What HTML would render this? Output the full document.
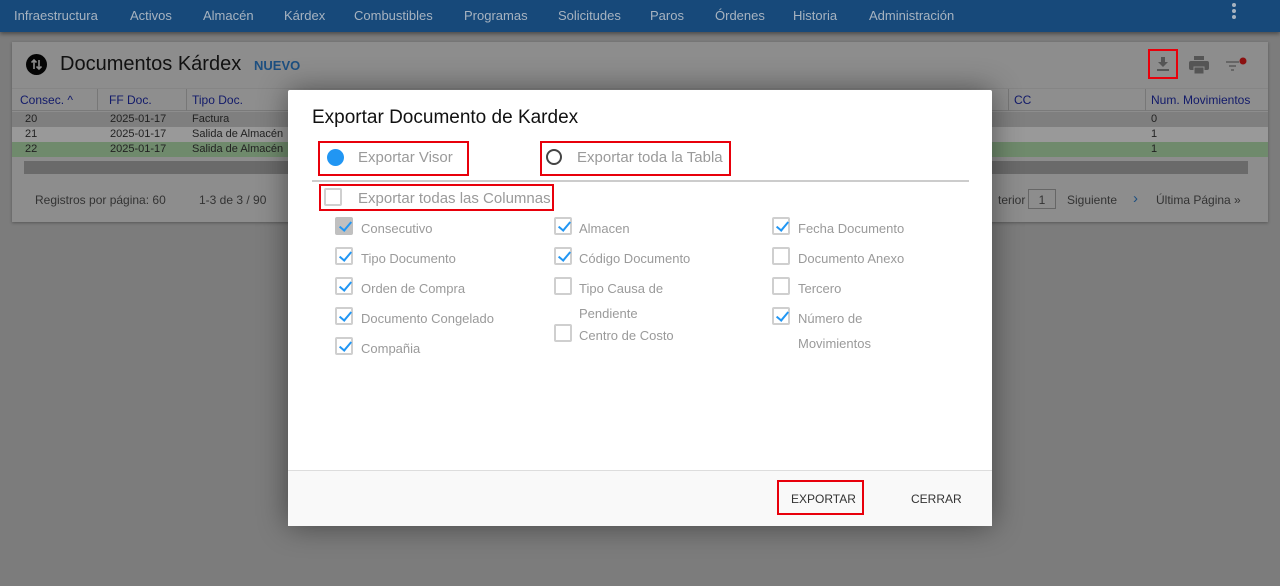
<!DOCTYPE html>
<html><head><meta charset="utf-8"><style>
*{box-sizing:border-box;margin:0;padding:0}
body{width:1280px;height:586px;overflow:hidden;background:#7c7c7c;font-family:"Liberation Sans",sans-serif;position:relative}
.nav{position:absolute;left:0;top:0;width:1280px;height:32px;background:#17497a;box-shadow:0 2px 4px rgba(0,0,0,.4)}
.nav span{position:absolute;top:8px;font-size:13px;color:#a7b3c0}
.card{position:absolute;left:12px;top:42px;width:1256px;height:180px;background:#8d8d8d;box-shadow:0 1px 3px rgba(0,0,0,.3)}
.abs{position:absolute}
.hdr{position:absolute;left:0;top:46px;width:1256px;height:23px;background:#8e8e8e;border-top:1px solid #858585;border-bottom:1px solid #7a7a7a}
.hdr span{position:absolute;top:4px;font-size:12px;color:#121a6a}
.row{position:absolute;left:0;width:1256px;height:15px;font-size:11px;color:#222}
.row span{position:absolute;top:1px}
.dlg{position:absolute;left:288px;top:90px;width:704px;height:436px;background:#fff;border-radius:2px;box-shadow:0 0 30px rgba(0,0,0,.45)}
.red{position:absolute;border:2px solid #e8000b}
.cb{position:absolute;width:18px;height:18px;border:2px solid #cfcfcf;border-radius:2px}
.cb.c::after{content:"";position:absolute;left:5px;top:0px;width:5px;height:10px;border:solid #2196f3;border-width:0 2px 2px 0;transform:rotate(40deg)}
.lbl{position:absolute;font-size:13px;color:#9a9a9a}
</style></head><body>
<div class="nav">
<span style="left:14px">Infraestructura</span><span style="left:130px">Activos</span><span style="left:203px">Almacén</span><span style="left:284px">Kárdex</span><span style="left:354px">Combustibles</span><span style="left:464px">Programas</span><span style="left:558px">Solicitudes</span><span style="left:650px">Paros</span><span style="left:715px">Órdenes</span><span style="left:793px">Historia</span><span style="left:869px">Administración</span>
<svg class="abs" style="left:1230px;top:2px" width="8" height="18"><circle cx="4" cy="3" r="2" fill="#a7b3c0"/><circle cx="4" cy="9" r="2" fill="#a7b3c0"/><circle cx="4" cy="15" r="2" fill="#a7b3c0"/></svg>
</div>
<div class="card">
<svg class="abs" style="left:14px;top:12px" width="21" height="21" viewBox="0 0 21 21"><circle cx="10.5" cy="10.5" r="10.5" fill="#050505"/><path d="M8 15V6M5.5 8.5L8 6l2.5 2.5M13 6v9M10.5 12.5L13 15l2.5-2.5" stroke="#8d8d8d" stroke-width="1.6" fill="none"/></svg>
<div class="abs" style="left:48px;top:11px;font-size:20px;color:#111">Documentos Kárdex</div>
<div class="abs" style="left:242px;top:16px;font-size:13px;font-weight:bold;color:#1d4f80">NUEVO</div>
<div class="abs" style="left:1136px;top:7px;width:30px;height:30px;border:2px solid #e8000b"></div>
<svg class="abs" style="left:1143px;top:14px" width="16" height="16" viewBox="0 0 16 16"><path d="M6 1h4v5h3l-5 5-5-5h3z" fill="#555"/><rect x="2" y="13" width="12" height="2" fill="#555"/></svg>
<svg class="abs" style="left:1177px;top:14px" width="20" height="18" viewBox="0 0 20 18"><rect x="5" y="0" width="10" height="4" fill="#555"/><rect x="0" y="5" width="20" height="9" rx="2" fill="#555"/><rect x="5" y="11" width="10" height="7" fill="#555" stroke="#8d8d8d" stroke-width="1"/></svg>
<svg class="abs" style="left:1213px;top:14px" width="24" height="18" viewBox="0 0 24 18"><path d="M1 6h13M4 10h7M6 14h3" stroke="#666" stroke-width="2"/><circle cx="18" cy="5" r="3.5" fill="#8b1010"/></svg>
<div class="hdr">
<span style="left:8px">Consec. ^</span><span style="left:97px">FF Doc.</span><span style="left:180px">Tipo Doc.</span><span style="left:1002px">CC</span><span style="left:1139px">Num. Movimientos</span>
<i class="abs" style="left:85px;top:0;width:1px;height:22px;background:#777"></i><i class="abs" style="left:174px;top:0;width:1px;height:22px;background:#777"></i><i class="abs" style="left:996px;top:0;width:1px;height:22px;background:#777"></i><i class="abs" style="left:1133px;top:0;width:1px;height:22px;background:#777"></i>
</div>
<div class="row" style="top:70px;background:#7f7f7f"><span style="left:13px">20</span><span style="left:98px">2025-01-17</span><span style="left:180px">Factura</span><span style="left:1139px">0</span></div>
<div class="row" style="top:85px;background:#999"><span style="left:13px">21</span><span style="left:98px">2025-01-17</span><span style="left:180px">Salida de Almacén</span><span style="left:1139px">1</span></div>
<div class="row" style="top:100px;background:#6f8a6c"><span style="left:13px">22</span><span style="left:98px">2025-01-17</span><span style="left:180px">Salida de Almacén</span><span style="left:1139px">1</span></div>
<div class="abs" style="left:12px;top:119px;width:1224px;height:13px;background:#6a6a6a"></div>
<div class="abs" style="left:23px;top:151px;font-size:12px;color:#333">Registros por página: 60</div>
<div class="abs" style="left:187px;top:151px;font-size:12px;color:#333">1-3 de 3 / 90</div>
<div class="abs" style="left:986px;top:151px;font-size:12px;color:#333">terior</div>
<div class="abs" style="left:1016px;top:147px;width:28px;height:20px;border:1px solid #666;font-size:12px;text-align:center;padding-top:3px;color:#333">1</div>
<div class="abs" style="left:1055px;top:151px;font-size:12px;color:#333">Siguiente</div>
<div class="abs" style="left:1121px;top:148px;font-size:15px;color:#1d4f80">›</div>
<div class="abs" style="left:1144px;top:151px;font-size:12px;color:#333">Última Página »</div>
</div>
<div class="dlg">
<div class="abs" style="left:24px;top:17px;font-size:19px;color:#111">Exportar Documento de Kardex</div>
<div class="red" style="left:30px;top:51px;width:151px;height:35px"></div>
<div class="abs" style="left:39px;top:59px;width:17px;height:17px;border-radius:50%;background:#2196f3"></div>
<div class="lbl" style="left:70px;top:59px;font-size:15px">Exportar Visor</div>
<div class="red" style="left:252px;top:51px;width:191px;height:35px"></div>
<div class="abs" style="left:258px;top:59px;width:16px;height:16px;border-radius:50%;border:2px solid #444"></div>
<div class="lbl" style="left:289px;top:59px;font-size:15px">Exportar toda la Tabla</div>
<div class="abs" style="left:24px;top:90px;width:657px;height:2px;background:#ccc"></div>
<div class="red" style="left:31px;top:94px;width:235px;height:27px"></div>
<div class="cb" style="left:36px;top:98px;width:18px;height:18px"></div>
<div class="lbl" style="left:70px;top:100px;font-size:15px">Exportar todas las Columnas</div>

<div class="cb c" style="left:47px;top:127px;background:#c0c0c0;border-color:#c0c0c0"></div><div class="lbl" style="left:73px;top:131px">Consecutivo</div>
<div class="cb c" style="left:47px;top:157px"></div><div class="lbl" style="left:73px;top:161px">Tipo Documento</div>
<div class="cb c" style="left:47px;top:187px"></div><div class="lbl" style="left:73px;top:191px">Orden de Compra</div>
<div class="cb c" style="left:47px;top:217px"></div><div class="lbl" style="left:73px;top:221px">Documento Congelado</div>
<div class="cb c" style="left:47px;top:247px"></div><div class="lbl" style="left:73px;top:251px">Compañia</div>

<div class="cb c" style="left:266px;top:127px"></div><div class="lbl" style="left:291px;top:131px">Almacen</div>
<div class="cb c" style="left:266px;top:157px"></div><div class="lbl" style="left:291px;top:161px">Código Documento</div>
<div class="cb" style="left:266px;top:187px"></div><div class="lbl" style="left:291px;top:186px;line-height:25px">Tipo Causa de<br>Pendiente</div>
<div class="cb" style="left:266px;top:234px"></div><div class="lbl" style="left:291px;top:238px">Centro de Costo</div>

<div class="cb c" style="left:484px;top:127px"></div><div class="lbl" style="left:510px;top:131px">Fecha Documento</div>
<div class="cb" style="left:484px;top:157px"></div><div class="lbl" style="left:510px;top:161px">Documento Anexo</div>
<div class="cb" style="left:484px;top:187px"></div><div class="lbl" style="left:510px;top:191px">Tercero</div>
<div class="cb c" style="left:484px;top:217px"></div><div class="lbl" style="left:510px;top:216px;line-height:25px">Número de<br>Movimientos</div>

<div class="abs" style="left:0;top:380px;width:704px;height:56px;background:#f9f9f9;border-top:1px solid #ddd"></div>
<div class="red" style="left:489px;top:390px;width:87px;height:35px"></div>
<div class="abs" style="left:503px;top:402px;font-size:12px;color:#333">EXPORTAR</div>
<div class="abs" style="left:623px;top:402px;font-size:12px;color:#333">CERRAR</div>
</div>
</body></html>
